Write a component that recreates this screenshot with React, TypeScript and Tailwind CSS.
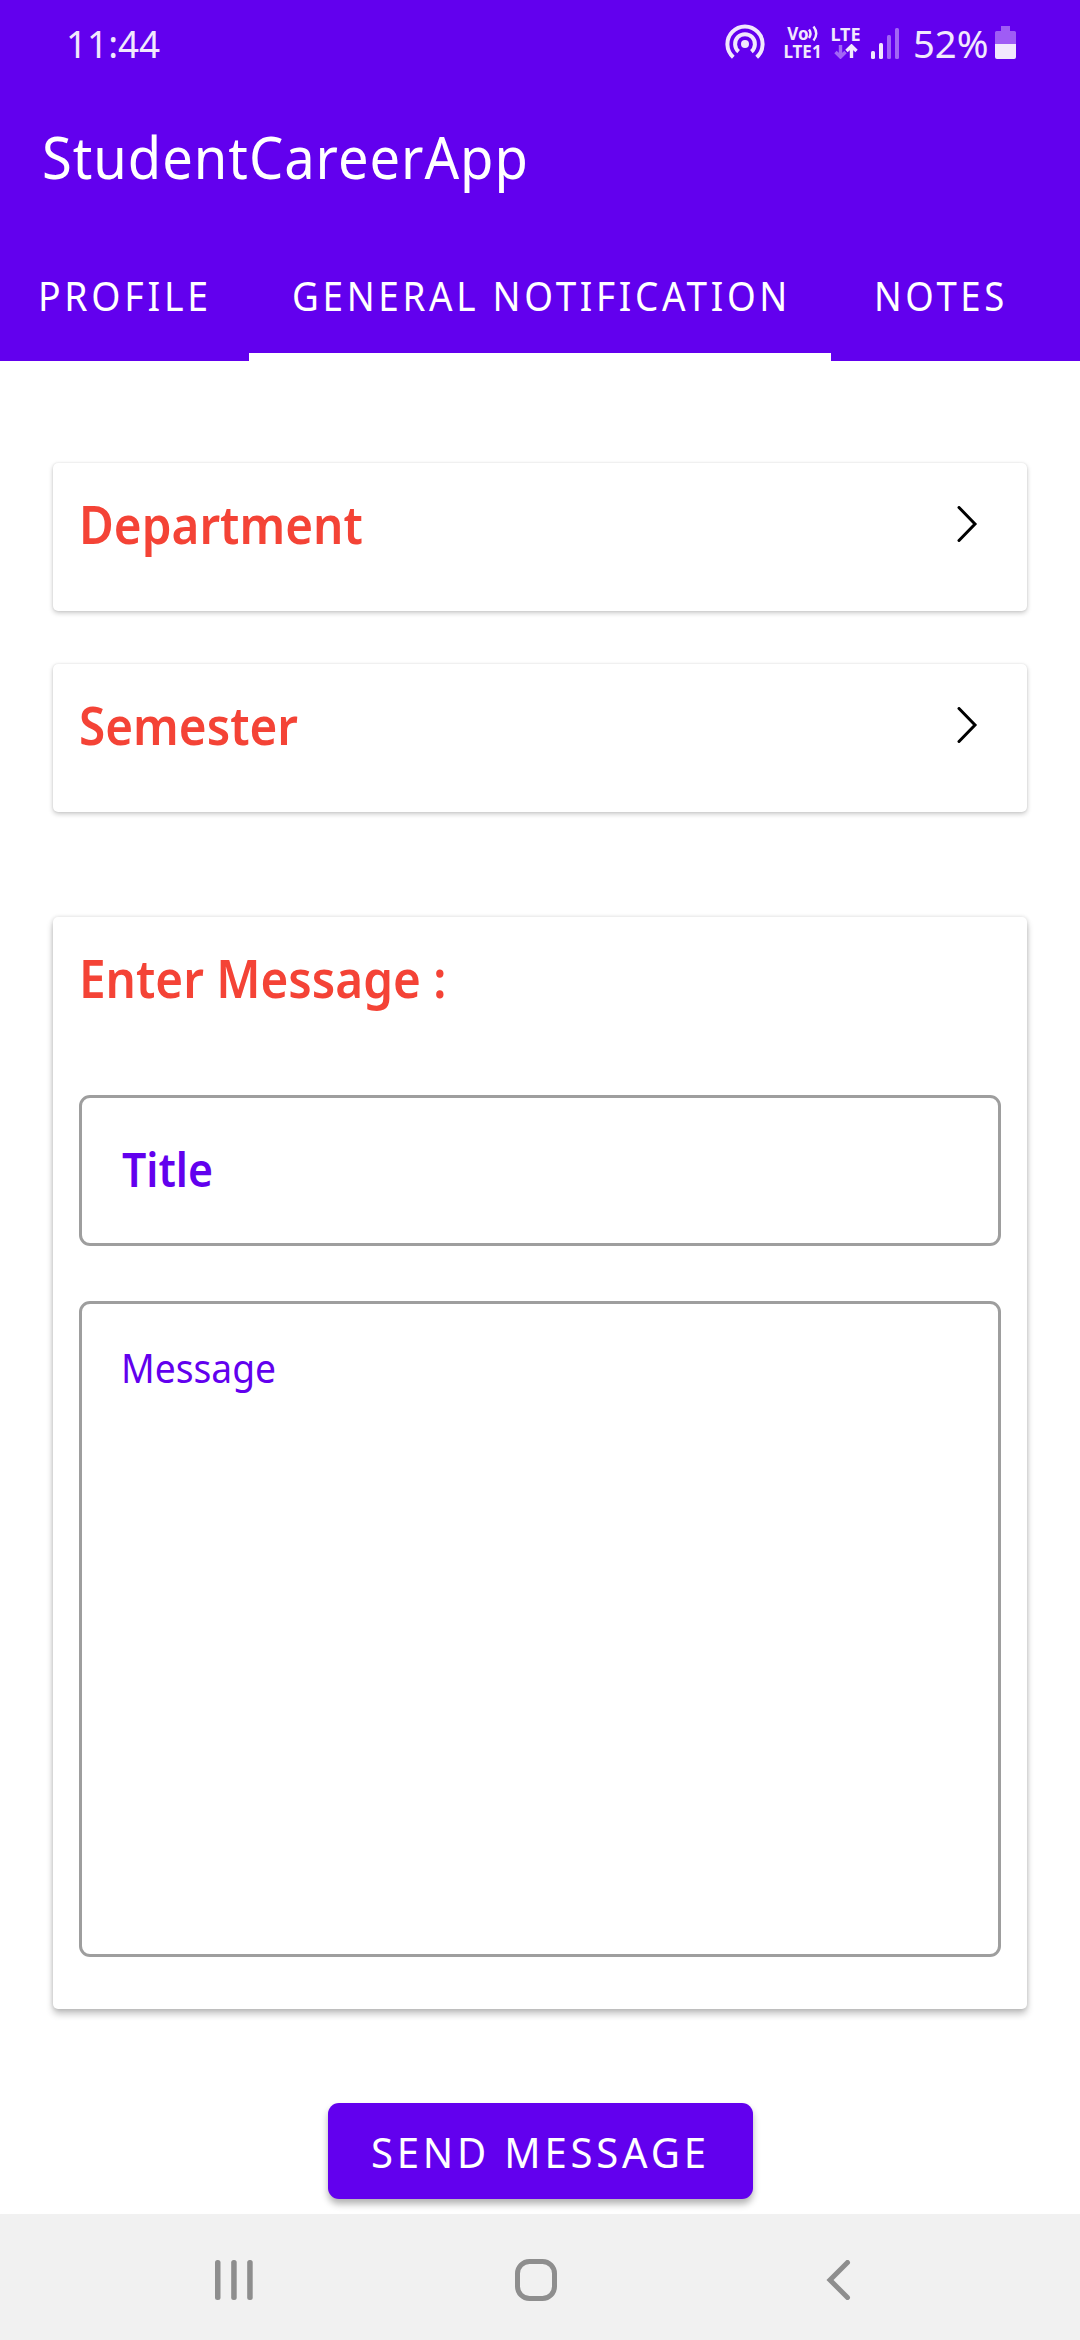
import type { ReactNode } from "react";

function HotspotIcon() {
  return (
    <svg width="40" height="36" viewBox="0 0 40 36" fill="none" stroke="currentColor" strokeWidth="4">
      <circle cx="20" cy="20" r="4" fill="currentColor" stroke="none" />
      <path d="M13.6 27.6A9.9 9.9 0 1 1 26.4 27.6" />
      <path d="M8.3 33.2A17.6 17.6 0 1 1 31.7 33.2" />
    </svg>
  );
}

function VolteIcon() {
  return (
    <div className="flex w-[39px] flex-col items-center text-[17px] leading-[18px] font-bold">
      <span className="flex h-[18px] items-center">
        <span className="-mr-px">Vo</span>
        <svg width="10" height="17" viewBox="0 0 10 17" fill="none" stroke="currentColor" strokeWidth="2.4">
          <path d="M1 4.5Q4 8.5 1 13" />
          <path d="M5.5 1.5Q11 8.5 5.5 15.5" />
        </svg>
      </span>
      <span className="h-[18px]">LTE1</span>
    </div>
  );
}

function LteDataIcon() {
  return (
    <div className="flex w-[31px] flex-col items-center text-[18px] leading-[17px] font-bold">
      <span className="h-[18px]">LTE</span>
      <svg width="24" height="15" viewBox="0 0 24 15" fill="none" strokeWidth="3.4">
        <path d="M6.5 1V12M1.5 8L6.5 13L11.5 8" stroke="#a266f5" />
        <path d="M17.5 14V3M12.5 7L17.5 2L22.5 7" stroke="currentColor" />
      </svg>
    </div>
  );
}

function SignalIcon() {
  return (
    <svg width="28" height="31" viewBox="0 0 28 31">
      <rect x="0" y="23" width="4" height="8" rx="1.5" fill="currentColor" />
      <rect x="8" y="15" width="4" height="16" rx="1.5" fill="currentColor" />
      <rect x="16" y="7" width="4" height="24" rx="1.5" fill="#a266f5" />
      <rect x="24" y="0" width="4" height="31" rx="1.5" fill="#a266f5" />
    </svg>
  );
}

function BatteryIcon() {
  return (
    <svg width="21" height="33" viewBox="0 0 21 33">
      <path d="M6 0H15V5H19.500A1.500 1.500 0 0 1 21 6.500V18H0V6.500A1.500 1.500 0 0 1 1.500 5H6Z" fill="#9f5cf5" />
      <path d="M0 18H21V31A2 2 0 0 1 19 33H2A2 2 0 0 1 0 31Z" fill="currentColor" />
    </svg>
  );
}

function ChevronRight() {
  return (
    <svg width="22" height="38" viewBox="0 0 22 38" fill="none" stroke="#000" strokeWidth="3" strokeLinecap="round">
      <path d="M3 1.500L19 18L3 34.500" />
    </svg>
  );
}

function SelectCard({ label }: { label: string }) {
  return (
    <button className="flex h-[148px] items-start justify-between rounded-[5px] bg-white pt-[23px] pr-[49px] pl-[26px] text-left shadow-[0_2px_5px_rgba(0,0,0,0.22),0_0_2px_rgba(0,0,0,0.1)]">
      <Heading>{label}</Heading>
      <span className="mt-5">
        <ChevronRight />
      </span>
    </button>
  );
}

function Heading({ children }: { children: ReactNode }) {
  return (
    <span className="block h-20 text-[52px] leading-[76px] font-semibold whitespace-pre text-[#f44336]">
      <span className="inline-block origin-left scale-x-[0.916]">{children}</span>
    </span>
  );
}

export default function App() {
  return (
    <div className="flex h-[2340px] w-[1080px] flex-col overflow-hidden bg-white font-['Noto_Sans',sans-serif]">
      <header className="flex h-[361px] flex-none flex-col bg-[#6200ee] text-white">
        <div className="flex h-[84px] items-center pl-[66px] text-[#f1e8fd]">
          <span className="w-[659px] text-[39px] leading-none">
            <span className="inline-block origin-left scale-x-[0.945]">11:44</span>
          </span>
          <HotspotIcon />
          <div className="mt-px ml-[18px]">
            <VolteIcon />
          </div>
          <div className="ml-2">
            <LteDataIcon />
          </div>
          <div className="mt-[3px] ml-[10px]">
            <SignalIcon />
          </div>
          <span className="ml-[14px] w-[76px] text-[39px] leading-none">
            <span className="inline-block origin-left scale-x-[0.98]">52%</span>
          </span>
          <span className="ml-[6px]">
            <BatteryIcon />
          </span>
        </div>
        <h1 className="flex h-[145px] items-center pl-[42px] text-[58px] leading-none tracking-[1px]">
          <span className="origin-left scale-x-[0.937]">StudentCareerApp</span>
        </h1>
        <nav className="flex h-[132px] text-[40px] leading-[134px] tracking-[4px] whitespace-nowrap">
          <span className="w-[249px] pl-[37.5px]">
            <span className="inline-block origin-left scale-x-[0.935]">PROFILE</span>
          </span>
          <span className="h-[132px] w-[582px] border-b-8 border-white pl-[43px]">
            <span className="inline-block h-[124px] origin-left scale-x-[0.921]">GENERAL NOTIFICATION</span>
          </span>
          <span className="pl-[43px]">
            <span className="inline-block origin-left scale-x-[0.912]">NOTES</span>
          </span>
        </nav>
      </header>

      <main className="flex flex-1 flex-col px-[53px] pt-[102px]">
        <div className="flex flex-col gap-[53px]">
          <SelectCard label="Department" />
          <SelectCard label="Semester" />
        </div>
        <section className="mt-[105px] h-[1092px] rounded-[5px] bg-white px-[26px] pt-[23px] shadow-[0_5px_7px_rgba(0,0,0,0.24),0_0_4px_rgba(0,0,0,0.14)]">
          <Heading>Enter Message :</Heading>
          <div className="mt-[75px] flex h-[151px] items-center rounded-[11px] border-3 border-[#9e9e9e] pl-[40px] text-[46px] leading-none font-semibold text-[#6200ee]">
            <span className="-mt-1 origin-left scale-x-[0.93]">Title</span>
          </div>
          <div className="mt-[55px] h-[656px] rounded-[11px] border-3 border-[#9e9e9e] pt-[34px] pl-[39px] text-[40px] leading-[60px] text-[#6200ee]">
            <span className="inline-block origin-left scale-x-[0.93]">Message</span>
          </div>
        </section>
        <button className="mt-[94px] flex h-24 w-[425px] items-center self-center rounded-[11px] bg-[#6200ee] pl-[43px] text-[42px] tracking-[4px] whitespace-nowrap text-white shadow-[0_5px_7px_rgba(0,0,0,0.3)]">
          <span className="origin-left scale-x-[0.953]">SEND MESSAGE</span>
        </button>
      </main>

      <footer className="flex h-[126px] flex-none items-center bg-[#f1f1f1] pl-[215px] text-[#8e8e8e]">
        <svg className="mt-[5px]" width="38" height="40" viewBox="0 0 38 40" fill="currentColor">
          <rect x="0" y="0" width="5.500" height="40" rx="2.500" />
          <rect x="16.200" y="0" width="5.500" height="40" rx="2.500" />
          <rect x="32.200" y="0" width="5.500" height="40" rx="2.500" />
        </svg>
        <svg className="mt-[5px] ml-[262px]" width="42" height="42" viewBox="0 0 42 42" fill="none" stroke="currentColor" strokeWidth="5">
          <rect x="2.500" y="2.500" width="37" height="37" rx="12" />
        </svg>
        <svg className="mt-[5px] ml-[269px]" width="25" height="40" viewBox="0 0 25 40" fill="none" stroke="currentColor" strokeWidth="5" strokeLinecap="round">
          <path d="M21.500 2.500L4 20L21.500 37.500" strokeLinejoin="miter" />
        </svg>
      </footer>
    </div>
  );
}
